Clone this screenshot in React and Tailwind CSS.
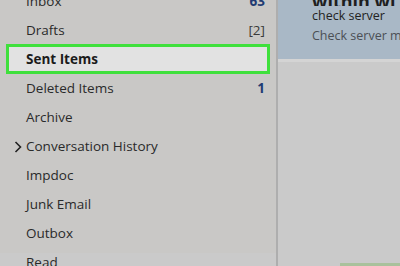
import React from "react";

const folders = [
  { name: "Inbox", count: "63", bold: true },
  { name: "Drafts", count: "[2]" },
  { name: "Sent Items", selected: true },
  { name: "Deleted Items", count: "1", bold: true },
  { name: "Archive" },
  { name: "Conversation History", chevron: true },
  { name: "Impdoc" },
  { name: "Junk Email" },
  { name: "Outbox" },
  { name: "Read" },
];

function Row({ f }) {
  if (f.selected) {
    return (
      <div className="shrink-0 ml-[6px] w-[264px] h-[30px] -my-[0.5px] border-[3px] border-[#3fe03c] bg-[#e2e2e2] flex items-center pl-[17px]">
        <span className="font-bold text-[#1b1b1b]">{f.name}</span>
      </div>
    );
  }
  return (
    <div className="shrink-0 h-[29px] flex items-center pl-[26px] pr-[11px] relative">
      {f.chevron && (
        <svg className="absolute left-[14px] top-[9px]" width="8" height="12" viewBox="0 0 8 12">
          <path d="M1.5 1 L6.5 6 L1.5 11" fill="none" stroke="#222" strokeWidth="1.6" />
        </svg>
      )}
      <span className="text-[#2a2a2a] flex-1">{f.name}</span>
      {f.count && (
        <span className={f.bold ? "font-bold text-[#1f3b73]" : "text-[#3a3a3a]"}>{f.count}</span>
      )}
    </div>
  );
}

export default function App() {
  return (
    <div
      className="w-[400px] h-[266px] overflow-hidden flex bg-[#cacaca] text-[13.5px]"
      style={{ fontFamily: '"Open Sans", "Noto Sans", sans-serif' }}
    >
      <div className="w-[276px] shrink-0 h-full bg-[#c9c8c6] flex flex-col -mt-[13.5px]">
        {folders.map((f) => (
          <Row key={f.name} f={f} />
        ))}
      </div>
      <div className="w-[2px] shrink-0 h-full bg-[#aeaeae]" />
      <div className="flex-1 h-full flex flex-col">
        <div className="h-[59px] shrink-0 bg-[#a9b8c6] pl-[34px] flex flex-col overflow-hidden whitespace-nowrap">
          <div className="h-[6px] shrink-0 overflow-hidden flex items-end">
            <span className="text-[18px] font-bold text-[#1e1e1e] leading-[18px] -mb-[4px]">within wi</span>
          </div>
          <div className="h-[20px] shrink-0 flex items-center text-[12.5px] text-[#222]">check server</div>
          <div className="h-[20px] shrink-0 flex items-center text-[12.5px] text-[#4b4f55]">Check server ma</div>
        </div>
        <div className="h-[3px] shrink-0 bg-[#d4d4d4]" />
        <div className="flex-1 flex flex-col justify-end items-end">
          <div className="w-[69px] h-[3px] bg-[#a9c19c]" />
        </div>
      </div>
    </div>
  );
}
